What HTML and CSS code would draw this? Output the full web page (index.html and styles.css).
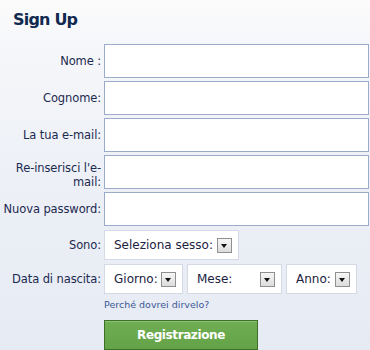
FILE: index.html
```html
<!DOCTYPE html>
<html lang="it">
<head>
<meta charset="utf-8">
<title>Sign Up</title>
<link rel="stylesheet" href="styles.css">
</head>
<body>
<div class="page">
  <h2 class="title">Sign Up</h2>
  <form class="form">
    <label class="lbl" for="nome">Nome :</label>
    <input class="txt" id="nome" type="text">

    <label class="lbl" for="cognome">Cognome:</label>
    <input class="txt" id="cognome" type="text">

    <label class="lbl" for="email">La tua e-mail:</label>
    <input class="txt" id="email" type="text">

    <label class="lbl lbl-two" for="email2">Re-inserisci l'e-mail:</label>
    <input class="txt" id="email2" type="text">

    <label class="lbl" for="pw">Nuova password:</label>
    <input class="txt" id="pw" type="password">

    <div class="lbl lbl-sono">Sono:</div>
    <div class="sel-row sel-row-sono">
      <div class="sel sel-sesso"><span>Seleziona sesso:</span><span class="arrow"></span></div>
    </div>

    <div class="lbl lbl-date">Data di nascita:</div>
    <div class="sel-row sel-row-date">
      <div class="sel sel-giorno"><span>Giorno:</span><span class="arrow"></span></div>
      <div class="sel sel-mese"><span>Mese:</span><span class="arrow"></span></div>
      <div class="sel sel-anno"><span>Anno:</span><span class="arrow"></span></div>
    </div>

    <a class="why" href="#">Perché dovrei dirvelo?</a>
    <button class="btn" type="button">Registrazione</button>
  </form>
</div>
</body>
</html>
```
FILE: styles.css
```css
html, body {
  margin: 0;
  padding: 0;
}
body {
  width: 370px;
  height: 350px;
  overflow: hidden;
  background: linear-gradient(180deg, #fbfbfb 0%, #f6f7fa 12%, #eef1f7 45%, #e6eaf3 100%);
  font-family: "DejaVu Sans", Verdana, sans-serif;
  font-size: 11.5px;
  color: #1c2a50;
}
.page {
  padding-top: 10px;
}
.title {
  margin: 0 0 14px 13px;
  font-size: 16px;
  line-height: 20px;
  font-weight: bold;
  letter-spacing: -0.8px;
  color: #12294f;
}
.form {
  display: grid;
  grid-template-columns: 101px 265px;
  column-gap: 3px;
  row-gap: 3px;
  margin: 0;
}
.lbl {
  display: flex;
  align-items: center;
  justify-content: flex-end;
  text-align: right;
  line-height: 14px;
  letter-spacing: -0.1px;
  color: #1c2a50;
}
.lbl-two {
  padding-top: 6px;
}
.txt {
  box-sizing: border-box;
  height: 34px;
  width: 265px;
  margin: 0;
  border: 1px solid #9babc9;
  background: #fff;
  padding: 0 4px;
  font: inherit;
}
.lbl-sono, .sel-row-sono {
  margin-top: 1px;
}
.lbl-date, .sel-row-date {
  margin-top: 1px;
}
.sel-row {
  display: flex;
  gap: 4px;
}
.sel {
  box-sizing: border-box;
  height: 30px;
  display: flex;
  align-items: center;
  padding: 0 6px 0 9px;
  background: #fff;
  border: 1px solid #d3d9e5;
  font-size: 12px;
  color: #1b2240;
}
.sel-sesso { width: 135px; }
.sel-giorno { width: 79px; }
.sel-mese { width: 95px; }
.sel-anno { width: 71px; }
.arrow {
  position: relative;
  box-sizing: border-box;
  width: 15px;
  height: 15px;
  margin-left: auto;
  border: 1px solid #8f8f8f;
  background: linear-gradient(180deg, #f6f6f6 0%, #dcdcdc 100%);
}
.arrow::after {
  content: "";
  position: absolute;
  left: 3px;
  top: 5px;
  border-left: 3.5px solid transparent;
  border-right: 3.5px solid transparent;
  border-top: 4px solid #111;
}
.why {
  grid-column: 2;
  margin-top: 1px;
  font-size: 9.5px;
  line-height: 14px;
  color: #3b5998;
  text-decoration: none;
}
.btn {
  grid-column: 2;
  box-sizing: border-box;
  width: 154px;
  height: 30px;
  margin-top: 5px;
  padding: 0;
  border: 1px solid #3d7026;
  background: linear-gradient(180deg, #6fae52 0%, #64a247 100%);
  box-shadow: inset 0 1px 0 #8cc271;
  color: #fff;
  font-family: "DejaVu Sans", Verdana, sans-serif;
  font-size: 12px;
  font-weight: bold;
  letter-spacing: -0.4px;
  cursor: pointer;
}
```
